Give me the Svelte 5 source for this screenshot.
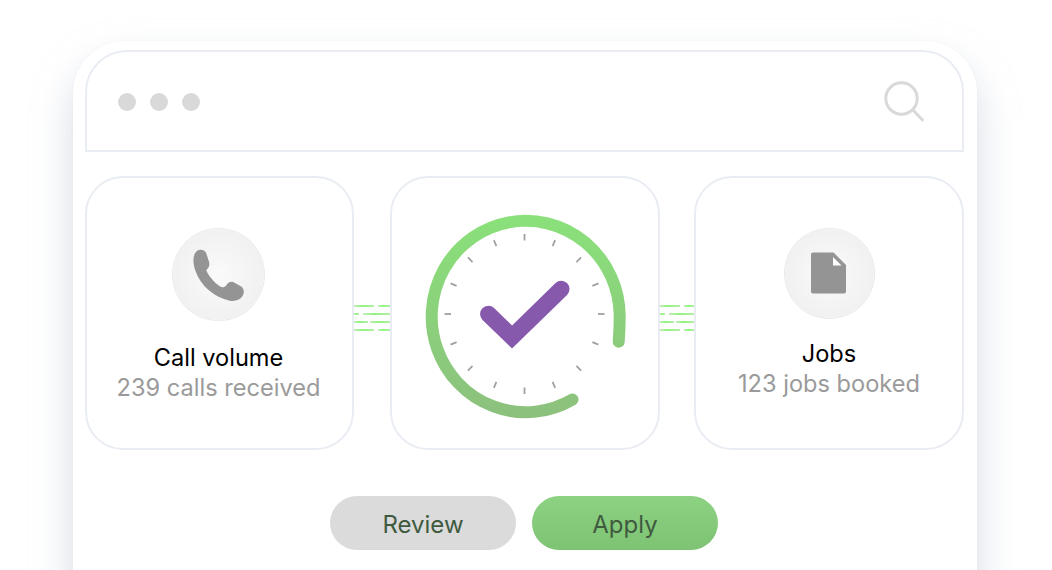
<script lang="ts">
  // first dash width and gap for each connector line, second dash takes the rest
  const lines = [
    [20, 4],
    [5, 4],
    [14, 2],
    [20, 4],
  ];

  const ticks = Array.from({ length: 16 }, (_, i) => i * 22.5);
</script>

{#snippet connector(width: number)}
  <div class="connector" style="width: {width}px">
    {#each lines as [a, gap]}
      <div class="line">
        <span class="dash" style="width: {a}px"></span>
        <span class="dash" style="width: {width - a - gap}px"></span>
      </div>
    {/each}
  </div>
{/snippet}

<div class="stage">
  <div class="panel">
    <header class="topbar">
      <div class="dots">
        <span></span>
        <span></span>
        <span></span>
      </div>
      <svg class="search" width="42" height="42" viewBox="0 0 42 42" fill="none">
        <circle cx="17.500" cy="17.500" r="15.700" stroke="#d9d9d9" stroke-width="3" />
        <path d="M29 29 L38.500 39" stroke="#d9d9d9" stroke-width="3" stroke-linecap="round" />
      </svg>
    </header>

    <section class="row">
      <div class="card left">
        <div class="badge big">
          <svg width="58" height="58" viewBox="121 75 175 175">
            <path
              fill="#949494"
              d="M141 94 C151 86 166 89 170 100 L179 128 C181 137 177 145 170 151 C179 171 192 186 212 200 C219 204 225 203 230 197 C235 190 242 184 251 187 L273 199 C284 205 286 218 280 228 C273 240 258 246 241 243 C194 233 154 200 137 152 C129 130 129 105 141 94 Z"
            />
          </svg>
        </div>
        <h3>Call volume</h3>
        <p>239 calls received</p>
      </div>

      {@render connector(36)}

      <div class="card">
        <svg class="gauge" width="212" height="216" viewBox="0 0 212 216" fill="none">
          <defs>
            <linearGradient id="ring" gradientUnits="userSpaceOnUse" x1="0" y1="0" x2="0" y2="216">
              <stop offset="0" stop-color="#8ae27a" />
              <stop offset="1" stop-color="#8cbf7d" />
            </linearGradient>
          </defs>
          {#each ticks as deg}
            <path
              d="M104.500 25 V31.500"
              stroke="#a0a0a0"
              stroke-width="1.800"
              transform="rotate({deg} 104.500 105)"
            />
          {/each}
          <path
            d="M198.700 132.700 C199.400 124 199.700 115 199.700 106.500 A94 95.700 0 1 0 152.500 190.500"
            stroke="url(#ring)"
            stroke-width="12"
            stroke-linecap="round"
          />
          <path
            d="M68.300 105 L92 128 L141.300 80"
            stroke="#8659ad"
            stroke-width="16.500"
            stroke-linecap="round"
            stroke-linejoin="miter"
          />
        </svg>
      </div>

      {@render connector(34)}

      <div class="card right">
        <div class="badge">
          <svg width="36" height="42" viewBox="0 0 36 42">
            <path
              fill="#949494"
              d="M2 .5 H22.500 L35 13 V39.500 Q35 41.500 33 41.500 H2 Q0 41.500 0 39.500 V2.500 Q0 .5 2 .5 Z"
            />
            <path fill="#fff" d="M22 5 V13.500 H30.500 Z" />
          </svg>
        </div>
        <h3>Jobs</h3>
        <p>123 jobs booked</p>
      </div>
    </section>

    <div class="actions">
      <button class="review">Review</button>
      <button class="apply">Apply</button>
    </div>
  </div>
</div>

<style>
  :global(body) {
    margin: 0;
    background: #fff;
    overflow: hidden;
  }

  .stage {
    width: 1052px;
    height: 570px;
    overflow: hidden;
    padding: 41px 0 0 73px;
    box-sizing: border-box;
    font-family: Inter, "Liberation Sans", sans-serif;
  }

  .panel {
    width: 904px;
    height: 640px;
    box-sizing: border-box;
    padding: 9px 13px 0 12px;
    background: #fff;
    border-radius: 52px 52px 0 0;
    box-shadow:
      0 0 2px rgba(225, 229, 236, 0.4),
      0 22px 38px rgba(178, 190, 208, 0.55);
  }

  .topbar {
    height: 102px;
    box-sizing: border-box;
    display: flex;
    align-items: center;
    justify-content: space-between;
    padding: 2px 36px 0 31px;
    border: 2px solid #e9edf3;
    border-radius: 42px 42px 0 0;
  }

  .dots {
    display: flex;
    gap: 14px;
  }
  .dots span {
    width: 18px;
    height: 18px;
    border-radius: 50%;
    background: #d9d9d9;
  }

  .row {
    display: flex;
    margin-top: 24px;
    height: 274px;
  }

  .card {
    flex: none;
    width: 270px;
    box-sizing: border-box;
    border: 2px solid #e9edf3;
    border-radius: 38px;
    display: flex;
    flex-direction: column;
    align-items: center;
    justify-content: center;
  }
  .card.left {
    width: 269px;
    padding: 5px 2px 0 0;
  }
  .card.right {
    padding-top: 1px;
  }

  .gauge {
    margin: 8px 0 0 2px;
  }

  .badge {
    width: 89px;
    height: 89px;
    border-radius: 50%;
    display: flex;
    align-items: center;
    justify-content: center;
    background: radial-gradient(circle, #fafafa 0%, #f1f1f1 70%, #ececec 100%);
    box-shadow: 0 0 0 1px #e9eae9;
  }
  .badge.big {
    width: 91px;
    height: 91px;
  }

  h3 {
    margin: 21px 0 0;
    font-size: 23.600px;
    line-height: 30px;
    font-weight: 400;
    color: #000;
  }
  .left h3 {
    margin-top: 23px;
  }

  p {
    margin: 0;
    font-size: 23.600px;
    line-height: 30px;
    color: #9a9a9a;
  }

  .connector {
    flex: none;
    display: flex;
    flex-direction: column;
    gap: 6px;
    margin-top: 129px;
    overflow: hidden;
  }

  .line {
    display: flex;
    justify-content: space-between;
    height: 2px;
  }
  .dash {
    height: 2px;
    background: linear-gradient(90deg, #c3edba, #90f57f 40%, #b4eea8);
  }

  .actions {
    display: flex;
    justify-content: center;
    gap: 16px;
    margin: 46px 0 0 -1px;
  }

  button {
    width: 186px;
    height: 54px;
    border: 0;
    border-radius: 27px;
    font: 400 24px Inter, "Liberation Sans", sans-serif;
    color: #405a40;
    padding: 2px 0 0;
  }
  .review {
    background: #dbdbdb;
  }
  .apply {
    background: linear-gradient(180deg, #8dd283, #7ec373);
  }
</style>
